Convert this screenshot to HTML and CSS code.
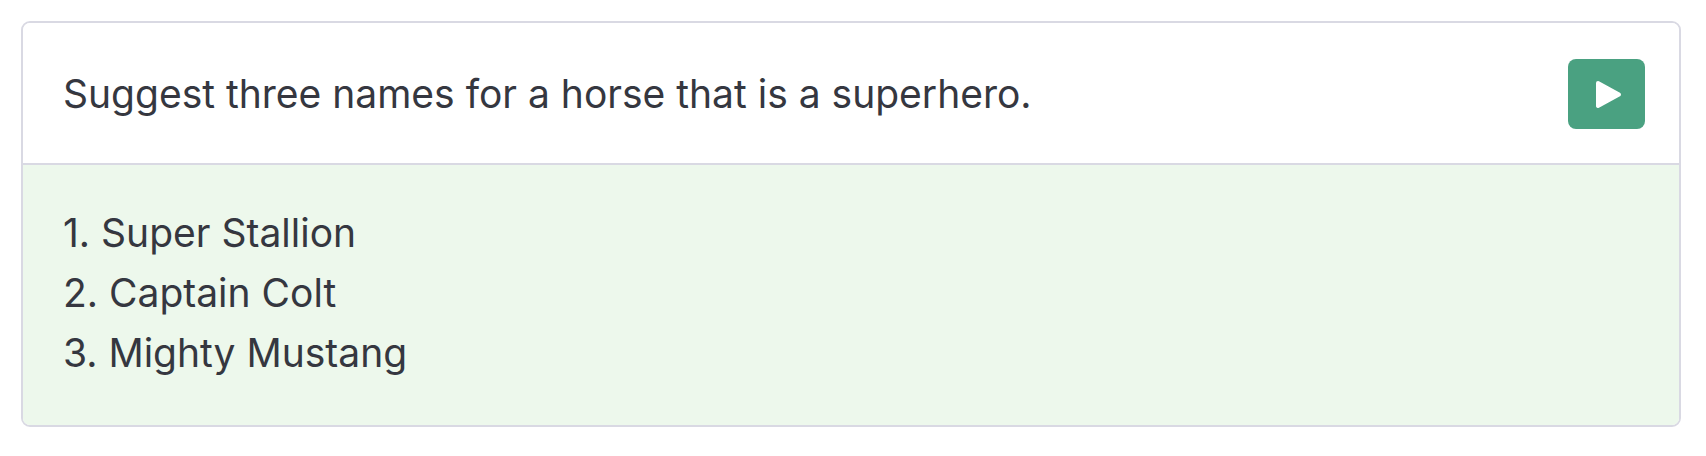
FILE: index.html
```html
<!DOCTYPE html>
<html lang="en">
<head>
<meta charset="utf-8">
<title>Prompt</title>
<link rel="stylesheet" href="styles.css">
</head>
<body>
<div class="card">
  <div class="prompt">
    <p class="prompt-text">Suggest three names for a horse that is a superhero.</p>
    <button class="run-btn" aria-label="Run">
      <svg width="27" height="29" viewBox="0 0 27 29"><polygon points="3,3 24,14.5 3,26" fill="#fff" stroke="#fff" stroke-width="4" stroke-linejoin="round"/></svg>
    </button>
  </div>
  <div class="result">
    <div class="line">1. Super Stallion</div>
    <div class="line">2. Captain Colt</div>
    <div class="line">3. Mighty Mustang</div>
  </div>
</div>
</body>
</html>
```

FILE: styles.css
```css
html, body {
  margin: 0;
  background: #ffffff;
}
body {
  padding: 21px 25px 0 21px;
  font-family: Inter, "Noto Sans", sans-serif;
  color: #353740;
}
.card {
  border: 2px solid #d9d9e3;
  border-radius: 9px;
  overflow: hidden;
  box-sizing: border-box;
  height: 406px;
  display: flex;
  flex-direction: column;
}
.prompt {
  display: flex;
  align-items: center;
  justify-content: space-between;
  height: 142px;
  box-sizing: border-box;
  padding: 2px 34px 0 40px;
  border-bottom: 2px solid #d9d9e3;
  background: #ffffff;
}
.prompt-text {
  margin: 0;
  font-size: 39px;
  line-height: 1.5;
}
.run-btn {
  width: 77px;
  height: 70px;
  border: none;
  border-radius: 8px;
  background: #4aa181;
  display: flex;
  align-items: center;
  justify-content: center;
  padding: 0 0 0 4px;
  cursor: pointer;
}
.result {
  flex: 1;
  background: #edf8ec;
  padding: 38px 40px;
  font-size: 39px;
  line-height: 60px;
}
.line {
  white-space: nowrap;
}
```
